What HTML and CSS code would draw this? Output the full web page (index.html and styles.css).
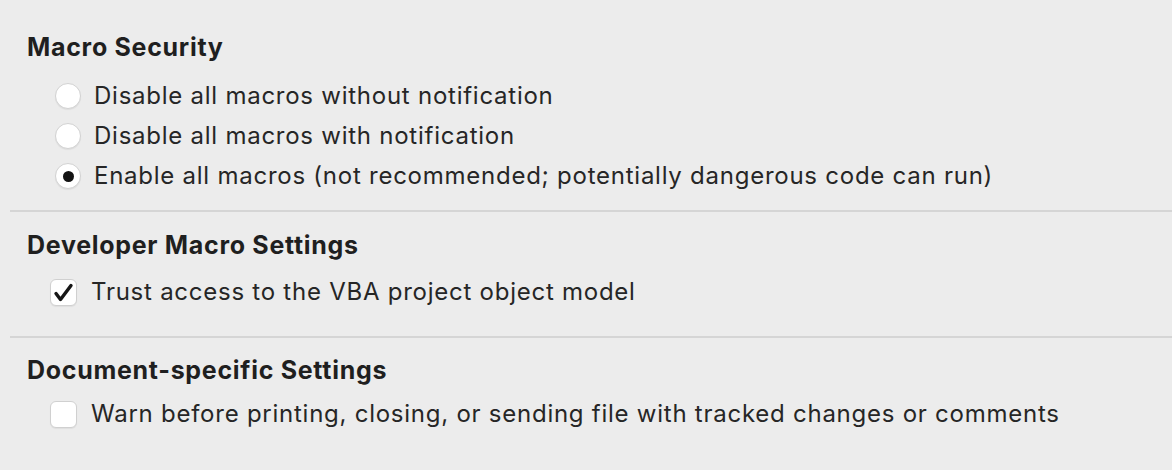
FILE: index.html
```html
<!DOCTYPE html>
<html lang="en">
<head>
<meta charset="utf-8">
<title>Macro Security</title>
<link rel="stylesheet" href="styles.css">
</head>
<body>
<div class="panel">
  <section class="section section-first">
    <h2 class="heading">Macro Security</h2>
    <div class="options radios">
      <label class="option"><span class="radio"></span><span class="label">Disable all macros without notification</span></label>
      <label class="option"><span class="radio"></span><span class="label">Disable all macros with notification</span></label>
      <label class="option"><span class="radio checked"><span class="dot"></span></span><span class="label">Enable all macros (not recommended; potentially dangerous code can run)</span></label>
    </div>
  </section>
  <section class="section section-second">
    <h2 class="heading">Developer Macro Settings</h2>
    <div class="options checks">
      <label class="option"><span class="checkbox"><svg viewBox="0 0 27 27" width="27" height="27"><path d="M6 14.5 L10.5 20.5 L21 6.5" fill="none" stroke="#161616" stroke-width="3.4" stroke-linecap="round" stroke-linejoin="round"/></svg></span><span class="label">Trust access to the VBA project object model</span></label>
    </div>
  </section>
  <section class="section section-third">
    <h2 class="heading">Document-specific Settings</h2>
    <div class="options checks">
      <label class="option"><span class="checkbox"></span><span class="label">Warn before printing, closing, or sending file with tracked changes or comments</span></label>
    </div>
  </section>
</div>
</body>
</html>
```
FILE: styles.css
```css
html, body {
  margin: 0;
  padding: 0;
  background: #ececec;
}
body {
  width: 1172px;
  height: 470px;
  overflow: hidden;
  font-family: Inter, "Liberation Sans", sans-serif;
  color: #262626;
}
.panel {
  margin-left: 10px;
}
.section {
  border-bottom: 2px solid #d5d5d5;
}
.section-third {
  border-bottom: none;
}
.heading {
  margin: 0;
  padding-left: 17px;
  font-size: 25px;
  line-height: 30px;
  font-weight: 700;
  letter-spacing: 0.7px;
  color: #1f1f1f;
}
.section-first { padding-top: 32px; padding-bottom: 14px; }
.section-first .options { margin-top: 14px; }
.section-second { padding-top: 18px; padding-bottom: 26px; }
.section-second .options { margin-top: 14px; }
.section-third { padding-top: 17px; }
.section-third .options { margin-top: 11px; }

.options {
  display: flex;
  flex-direction: column;
}
.radios { padding-left: 45px; }
.radios .option { height: 40px; gap: 13px; }
.checks { padding-left: 40px; }
.checks .option { height: 36px; gap: 14px; }
.option {
  display: flex;
  align-items: center;
  font-size: 24px;
  letter-spacing: 0.75px;
}
.label {
  line-height: 30px;
  color: #262626;
}
.radio {
  width: 26px;
  height: 26px;
  box-sizing: border-box;
  border-radius: 50%;
  background: #ffffff;
  border: 1px solid #d2d2d2;
  box-shadow: 0 1px 1px rgba(0,0,0,0.06);
  display: flex;
  align-items: center;
  justify-content: center;
  flex: none;
}
.dot {
  width: 11px;
  height: 11px;
  border-radius: 50%;
  background: #141414;
}
.checkbox {
  width: 27px;
  height: 27px;
  box-sizing: border-box;
  border-radius: 6px;
  background: #ffffff;
  border: 1px solid #d0d0d0;
  box-shadow: 0 1px 1px rgba(0,0,0,0.06);
  flex: none;
  position: relative;
}
.checkbox svg {
  position: absolute;
  left: -1px;
  top: -1px;
}
```
